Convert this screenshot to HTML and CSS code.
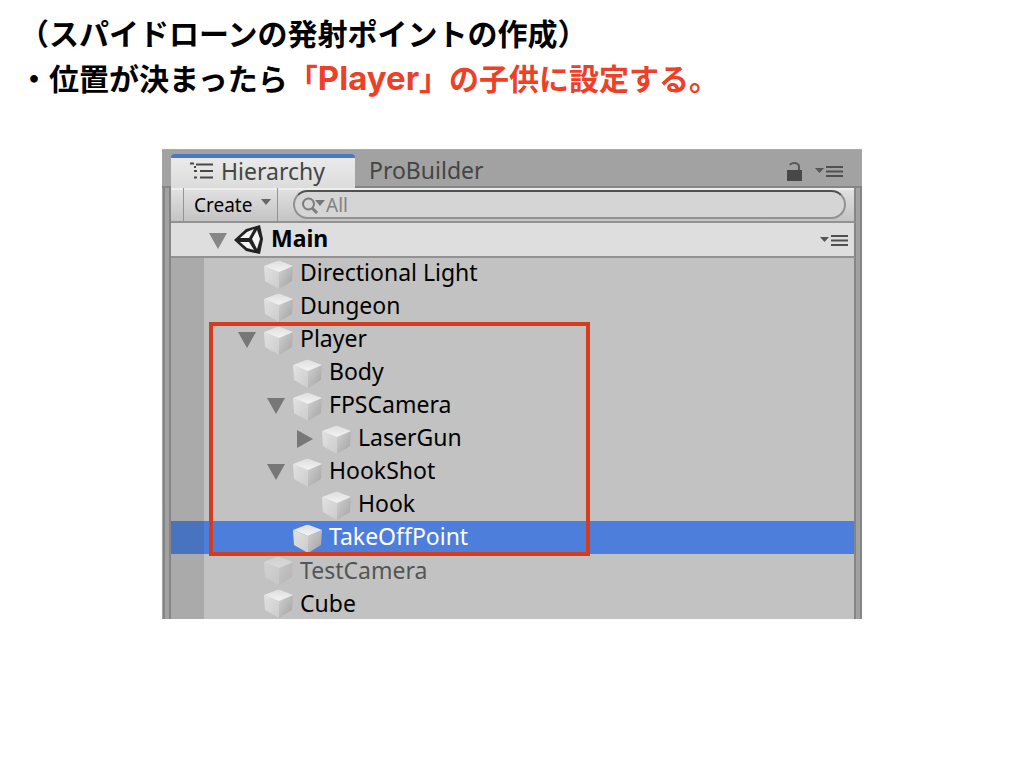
FILE: index.html
```html
<!DOCTYPE html>
<html lang="ja">
<head>
<meta charset="utf-8">
<title>スパイドローンの発射ポイントの作成</title>
<link rel="stylesheet" href="styles.css">
</head>
<body>
<svg class="defs" aria-hidden="true">
  <defs>
    <linearGradient id="top" x1="0" y1="0" x2="0" y2="1"><stop offset="0" stop-color="#dedede"/><stop offset="1" stop-color="#f4f4f4"/></linearGradient>
    <linearGradient id="left" x1="0" y1="0" x2="1" y2="1"><stop offset="0" stop-color="#e2e2e2"/><stop offset="1" stop-color="#cccccc"/></linearGradient>
    <linearGradient id="right" x1="0" y1="0" x2="1" y2="1"><stop offset="0" stop-color="#d0d0d0"/><stop offset="1" stop-color="#a2a2a2"/></linearGradient>
    <symbol id="cube" viewBox="0 0 30 30">
      <path d="M0 6 15 12V29L1 21Z" fill="url(#left)"/>
      <path d="M15 12 29 6 28 21 15 29Z" fill="url(#right)"/>
      <path d="M0 6 13 1Q15 .5 16 1L29 6 15 12Z" fill="url(#top)"/>
    </symbol>
    <symbol id="menu" viewBox="0 0 30 14">
      <path d="M1 4H10L5.500 9Z" fill="#555"/>
      <path d="M12 3H29M12 7.500H29M12 12H29" stroke="#505050" stroke-width="2"/>
    </symbol>
  </defs>
</svg>
<header class="heading">
  <h1>（スパイドローンの発射ポイントの作成）</h1>
  <p>・位置が決まったら<em>「<span class="latin">Player</span>」の子供に設定する。</em></p>
</header>
<main class="window">
  <nav class="tabs">
    <button class="tab active" type="button">
      <svg class="list-icon" viewBox="0 0 24 18" aria-hidden="true"><path d="M0 1.500H4M6 2.500H23M4 9H7M10 9H23M4 15.500H7M10 15.500H23M4 5H6" stroke="#484848" stroke-width="2"/></svg>
      Hierarchy
    </button>
    <button class="tab" type="button">ProBuilder</button>
    <span class="tab-tools">
      <button class="icon-button" type="button" aria-label="Lock"><svg class="lock" viewBox="0 0 16 20"><path d="M1 9H16V20H1Z" fill="#484848"/><path d="M4 4Q5 2 8.500 2T13 5V9" fill="none" stroke="#5a5a5a" stroke-width="2"/></svg></button>
      <button class="icon-button" type="button" aria-label="Tab menu"><svg class="menu"><use href="#menu"/></svg></button>
    </span>
  </nav>
  <div class="panel">
    <div class="toolbar">
      <button class="create" type="button">Create <svg class="caret" viewBox="0 0 10 7" aria-hidden="true"><path d="M0 0H10L5 6Z" fill="#666"/></svg></button>
      <label class="search">
        <svg class="glass" viewBox="0 0 24 18" aria-hidden="true"><circle cx="6.500" cy="8" r="5.500" fill="none" stroke="#7c7c7c" stroke-width="2"/><path d="M10 12 15 17" stroke="#7c7c7c" stroke-width="3"/><path d="M13 4H23L18 10Z" fill="#777"/></svg>
        <input type="text" placeholder="All" aria-label="Search">
      </label>
    </div>
    <div class="scene">
      <svg class="arrow" viewBox="0 0 18 18" aria-hidden="true"><path d="M0 1H18L9 17Z" fill="#868686"/></svg>
      <svg class="unity" viewBox="0 0 30 32" aria-hidden="true"><path d="M0 16 12 5 26 1 29 15 26 30 12 27Z" fill="#222"/><path d="M6 14 13 8 20 5 15 14ZM18 15 23 6 26 15 23 25ZM6 18H15L20 26 13 24Z" fill="#f4f4f4"/></svg>
      <strong>Main</strong>
      <button class="icon-button" type="button" aria-label="Scene menu"><svg class="menu"><use href="#menu"/></svg></button>
    </div>
    <ul class="tree">
      <li class="row depth-1"><span class="twisty"></span><svg class="cube"><use href="#cube"/></svg>Directional Light</li>
      <li class="row depth-1"><span class="twisty"></span><svg class="cube"><use href="#cube"/></svg>Dungeon</li>
      <li class="row depth-1"><span class="twisty open"></span><svg class="cube"><use href="#cube"/></svg>Player</li>
      <li class="row depth-2"><span class="twisty"></span><svg class="cube"><use href="#cube"/></svg>Body</li>
      <li class="row depth-2"><span class="twisty open"></span><svg class="cube"><use href="#cube"/></svg>FPSCamera</li>
      <li class="row depth-3"><span class="twisty closed"></span><svg class="cube"><use href="#cube"/></svg>LaserGun</li>
      <li class="row depth-2"><span class="twisty open"></span><svg class="cube"><use href="#cube"/></svg>HookShot</li>
      <li class="row depth-3"><span class="twisty"></span><svg class="cube"><use href="#cube"/></svg>Hook</li>
      <li class="row depth-2 selected"><span class="twisty"></span><svg class="cube"><use href="#cube"/></svg>TakeOffPoint</li>
      <li class="row depth-1 inactive"><span class="twisty"></span><svg class="cube"><use href="#cube"/></svg>TestCamera</li>
      <li class="row depth-1"><span class="twisty"></span><svg class="cube"><use href="#cube"/></svg>Cube</li>
      <li class="highlight" aria-hidden="true"></li>
    </ul>
  </div>
</main>
</body>
</html>
```
FILE: styles.css
```css
* { box-sizing: border-box; }
body { margin: 0; background: #fff; color: #000; font-family: "Noto Sans", "Open Sans", sans-serif; }
button { border: 0; padding: 0; background: none; font: inherit; color: inherit; }
svg { display: block; flex: none; }
.defs { position: absolute; width: 0; height: 0; }

.heading { padding: 10px 19px 0; font-family: "Noto Sans CJK JP", sans-serif; font-size: 30px; line-height: 45px; font-weight: 700; }
.heading h1, .heading p { margin: 0; font-size: inherit; font-weight: inherit; }
.heading em { font-style: normal; color: #ee4026; }
.latin { font-family: Inter, sans-serif; font-size: 33px; line-height: 30px; }

.window { max-width: 700px; margin: 49px auto 0; background: #a2a2a2; }
.tabs { display: flex; height: 39px; padding: 4px 18px 0 9px; color: #454545; font-size: 23px; background: linear-gradient(#a2a2a2 36px, #858585 36px); border-top: 1px solid #aaa; }
.tab { display: flex; align-items: center; padding: 0 14px 2px; }
.tab.active { width: 184px; padding: 0 0 5px 19px; gap: 7px; background: linear-gradient(#eaeaea, #dcdcdc); border-top: 4px solid #4b79bf; border-radius: 4px 4px 0 0; }
.list-icon { width: 24px; height: 18px; }
.tab-tools { display: flex; align-items: center; gap: 12px; margin-left: auto; }
.lock { width: 16px; height: 20px; }
.menu { width: 30px; height: 14px; }

.panel { margin: 0 2px 0 1px; padding: 0 4px 0 8px; background: linear-gradient(90deg, #858585 2px, #a2a2a2 2px, #a2a2a2 6px, #858585 6px, #858585 8px, #a2a2a2 8px); box-shadow: 2px 0 #858585; }
.toolbar, .scene, .tree { border-right: 2px solid #858585; }
.toolbar { display: flex; height: 35px; padding: 0 8px 0 12px; gap: 15px; background: linear-gradient(#eee 2px, #e0e0e0 2px, #c4c4c4); border-bottom: 2px solid #929292; }
.create { display: flex; align-items: center; gap: 9px; width: 95px; border: solid #949494; border-width: 0 1px; padding: 0 0 0 10px; font-size: 19px; }
.caret { width: 10px; height: 7px; margin-bottom: 4px; }
.search { display: flex; align-items: center; flex: 1; height: 29px; margin-top: 2px; padding-left: 7px; background: #d5d5d5; border: 2px solid #929292; border-top-color: #505050; border-radius: 15px; }
.glass { width: 24px; height: 18px; }
.search input { flex: 1; min-width: 0; height: 25px; padding: 0; border: 0; background: transparent; font: inherit; font-size: 19px; outline: 0; }
.search input::placeholder { color: #838383; opacity: 1; }

.scene { display: flex; align-items: center; height: 35px; padding: 0 5px 0 38px; background: #dedede; border-bottom: 2px solid #929292; font-size: 23px; line-height: 30px; }
.arrow { width: 18px; height: 18px; margin: 2px 7px 0 0; }
.unity { width: 30px; height: 32px; margin-right: 7px; }
.scene strong { padding-bottom: 3px; }
.scene .icon-button { margin-left: auto; }

.tree { position: relative; margin: 0; padding: 0; list-style: none; background: linear-gradient(90deg, #aaa 33px, #c2c2c2 33px); }
.row { display: flex; align-items: center; height: 33px; padding-bottom: 4px; font-size: 23px; line-height: 28px; white-space: nowrap; }
.row:first-child { height: 32px; }
.row:nth-child(n+10) { padding-bottom: 1px; }
.row:nth-child(11) { height: 32px; }
.depth-1 { padding-left: 67px; }
.depth-2 { padding-left: 96px; }
.depth-3 { padding-left: 125px; }
.twisty { width: 18px; margin: 5px 8px 0 0; }
.twisty::before { content: ""; display: block; }
.open::before { height: 16px; background: #777; clip-path: polygon(0 0, 100% 0, 50% 100%); }
.closed::before { width: 16px; height: 18px; margin-left: 1px; background: #777; clip-path: polygon(0 0, 100% 50%, 0 100%); }
.cube { width: 30px; height: 30px; margin: 6px 6px 0 0; }
.row:nth-child(n+10) .cube { margin-top: 2px; }
.selected { background: linear-gradient(90deg, #4873bf 33px, #4e7edb 33px); color: #fff; }
.inactive { color: #555; }
.inactive .cube { opacity: .5; }
.highlight { position: absolute; left: 38px; top: 64px; width: 381px; height: 234px; border: 4px solid #d23d20; }
```
